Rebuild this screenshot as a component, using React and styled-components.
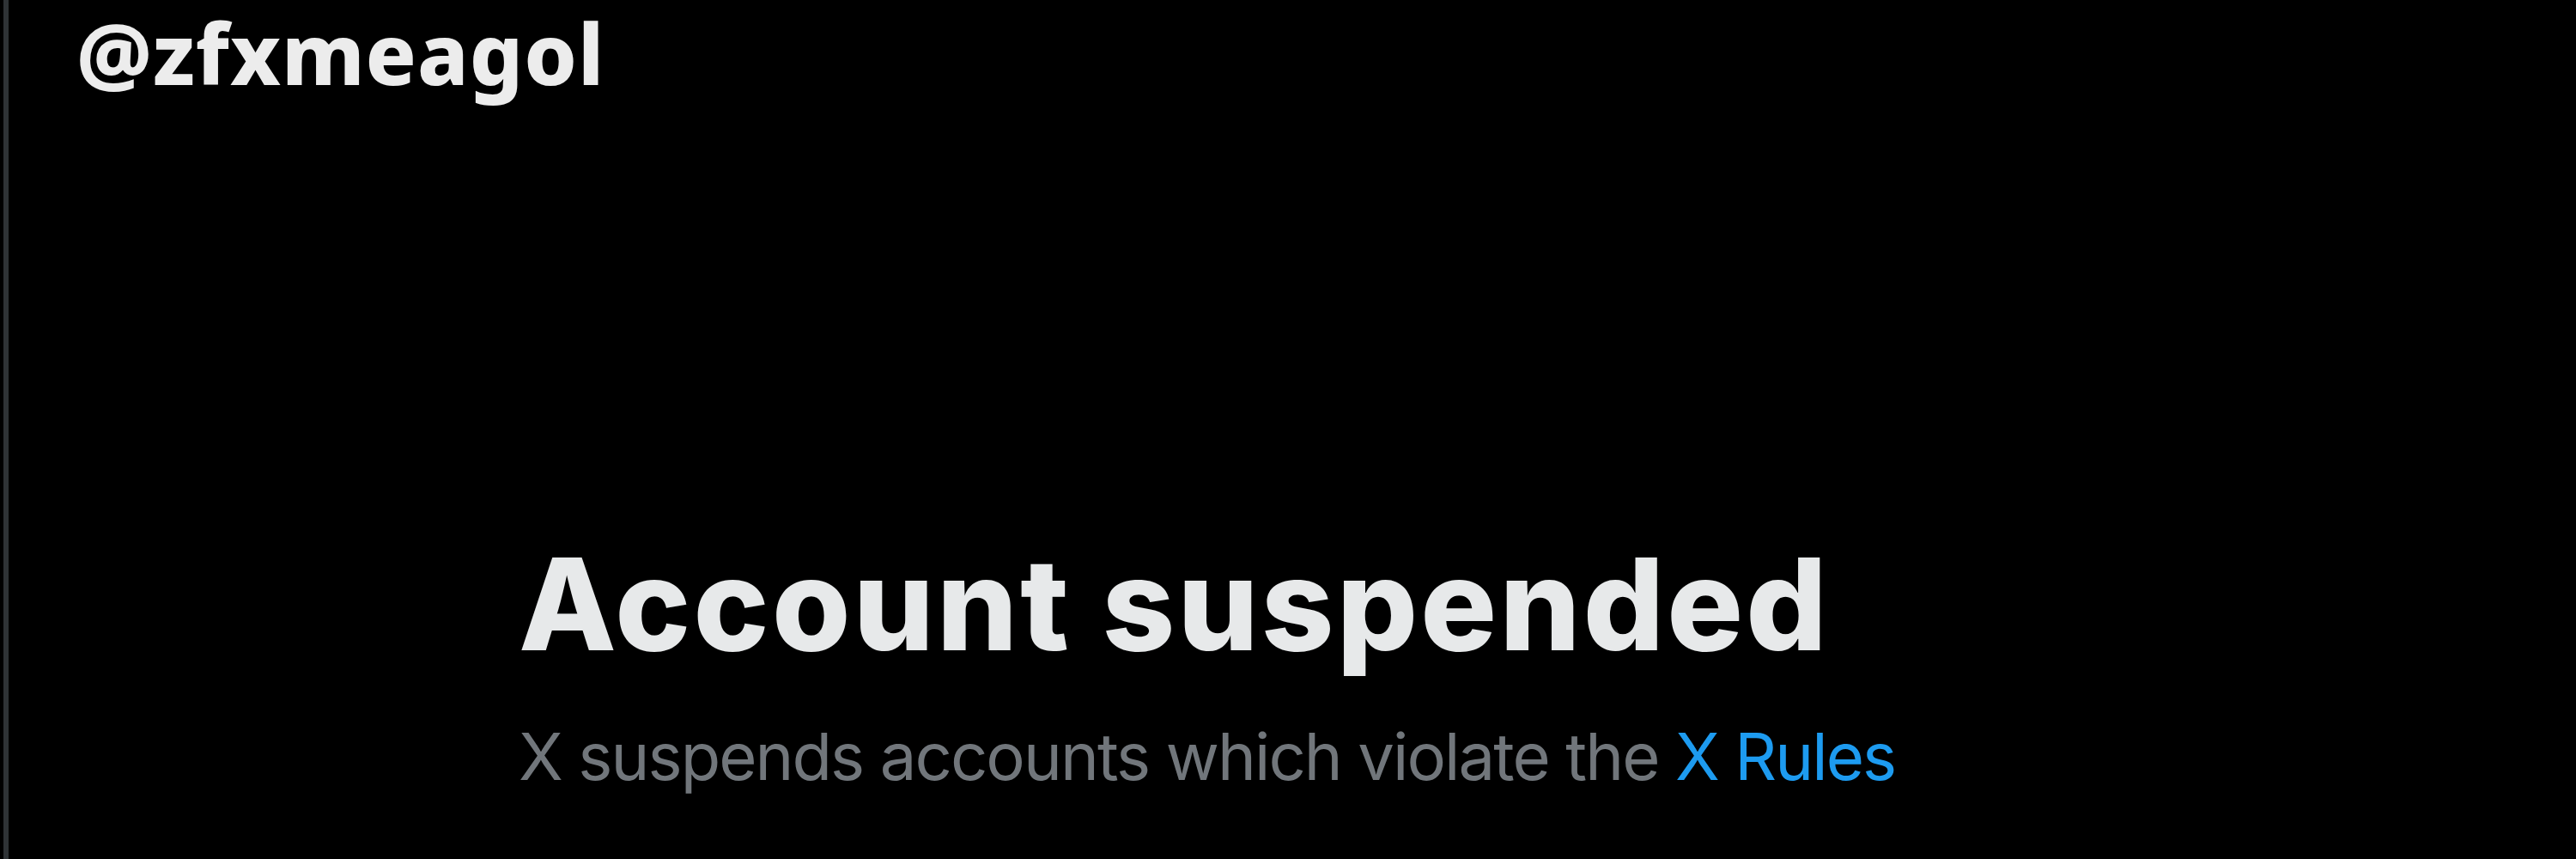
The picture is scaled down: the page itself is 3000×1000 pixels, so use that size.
import React from "react";
import styled, { createGlobalStyle } from "styled-components";

const GlobalStyle = createGlobalStyle`
  html, body { margin: 0; background: #000; }
  #root { min-height: 100vh; }
`;

const Page = styled.div`
  display: flex;
  min-height: 100vh;
  background: #000;
`;

const LeftRule = styled.div`
  width: 6px;
  margin-left: 4px;
  background: #2f3336;
  flex: none;
`;

const Main = styled.main`
  flex: 1;
  display: flex;
  flex-direction: column;
`;

const Handle = styled.h2`
  margin: 12px 0 0 79px;
  font-family: "Noto Sans", "Open Sans", sans-serif;
  font-weight: 800;
  font-size: 98px;
  line-height: 1;
  letter-spacing: 1px;
  color: #ececec;
`;

const Notice = styled.section`
  margin: 520px 0 0 594px;
  display: flex;
  flex-direction: column;
  gap: 64px;
`;

const Title = styled.h1`
  margin: 0;
  font-family: Inter, "Liberation Sans", sans-serif;
  font-weight: 800;
  font-size: 148px;
  line-height: 1;
  letter-spacing: 3.2px;
  color: #e7e9ea;
`;

const Sub = styled.p`
  margin: 0;
  font-family: Inter, "Liberation Sans", sans-serif;
  font-weight: 400;
  font-size: 76px;
  line-height: 1;
  letter-spacing: -1.95px;
  color: #71767b;
`;

const RuleLink = styled.a`
  color: #1d9bf0;
  text-decoration: none;
`;

export default function App() {
  return (
    <>
      <GlobalStyle />
      <Page>
        <LeftRule />
        <Main>
          <Handle>@zfxmeagol</Handle>
          <Notice>
            <Title>Account suspended</Title>
            <Sub>
              X suspends accounts which violate the <RuleLink href="#">X Rules</RuleLink>
            </Sub>
          </Notice>
        </Main>
      </Page>
    </>
  );
}
